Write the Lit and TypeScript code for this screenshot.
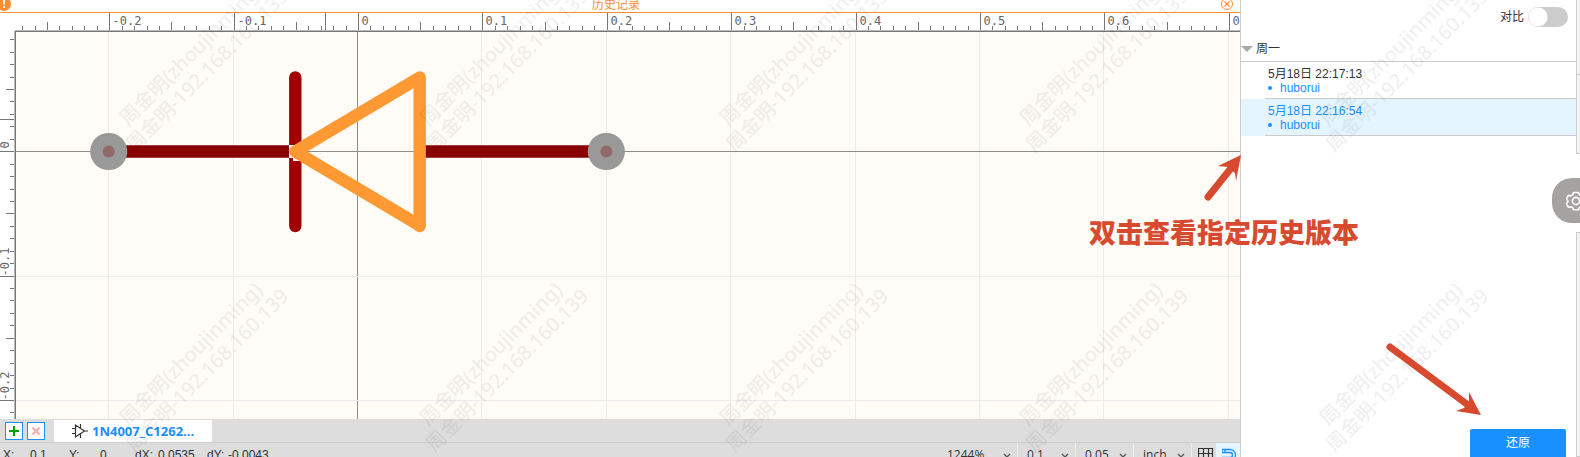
import { LitElement, html, svg, css } from "lit";
import { customElement, state } from "lit/decorators.js";

const STEP = 124.4;
const ORIGIN_X = 357.5;
const ORIGIN_Y = 138.7;
const RULER_TOP = 18;
const RULER_LEFT = 15;

const range = (from: number, to: number) =>
  Array.from({ length: Math.max(0, to - from + 1) }, (_, i) => from + i);

// Ruler units are tenths of an inch, one minor tick each hundredth.
const label = (tick: number) => (tick === 0 ? "0" : (tick / 100).toFixed(1));

@customElement("schematic-canvas")
export class SchematicCanvas extends LitElement {
  @state() private w = 1240;
  @state() private h = 406;
  private observer?: ResizeObserver;

  static styles = css`
    :host {
      display: block;
      overflow: hidden;
      background: #fffcf7;
    }
    .sheet {
      display: block;
      width: 100%;
      height: 100%;
    }
    .ruler {
      fill: #fff;
    }
    .grid {
      stroke: #ececec;
    }
    .axis {
      stroke: #8f8f8a;
    }
    .edge {
      stroke: #777;
    }
    .edge-soft {
      stroke: #bbb;
    }
    .tick {
      stroke: #777;
    }
    .num {
      font: 12px "DejaVu Sans Mono", monospace;
      fill: #666;
    }
  `;

  connectedCallback() {
    super.connectedCallback();
    this.observer = new ResizeObserver(() => {
      this.w = this.clientWidth;
      this.h = this.clientHeight;
    });
    this.observer.observe(this);
  }

  disconnectedCallback() {
    super.disconnectedCallback();
    this.observer?.disconnect();
  }

  render() {
    const { w, h } = this;
    const minor = STEP / 10;
    const x = (n: number) => Math.floor(ORIGIN_X + n * minor) + 0.5;
    const y = (n: number) => Math.floor(ORIGIN_Y + n * minor) + 0.5;
    const cols = range(Math.ceil((RULER_LEFT + 4 - ORIGIN_X) / minor), Math.floor((w - ORIGIN_X) / minor));
    const rows = range(Math.ceil((RULER_TOP + 6 - ORIGIN_Y) / minor), Math.floor((h - ORIGIN_Y) / minor));
    const size = (n: number, full: number, mid: number) =>
      n % 10 === 0 ? full : n % 5 === 0 ? mid : 5;
    const majorCols = cols.filter((n) => n % 10 === 0);
    const majorRows = rows.filter((n) => n % 10 === 0);

    return html`
      <svg class="sheet" role="img" aria-label="Schematic">
        ${majorCols.map((n) => svg`<line class=${n ? "grid" : "axis"} x1=${x(n)} x2=${x(n)} y1=${RULER_TOP} y2=${h} />`)}
        ${majorRows.map((n) => svg`<line class=${n ? "grid" : "axis"} y1=${y(n)} y2=${y(n)} x1=${RULER_LEFT} x2=${w} />`)}

        <g fill="none" stroke-width="12.4">
          <path d="M295.3 64.5V213" stroke="#a00000" stroke-linecap="round" />
          <path d="M289 132h7v13h-7zM293 144h8v4h-8z" fill="#fff" stroke="none" />
          <path d="M108.5 138.5H289M420 138.5H601" stroke="#880000" />
          <path d="M418 65.5L295.3 138.5L418 211.5" stroke="#ff9933" stroke-linejoin="round" />
          <path d="M419.7 64.5V213" stroke="#ff9933" stroke-linecap="round" />
        </g>
        ${[108.7, 606.3].map((cx) => svg`
          <circle cx=${cx} cy="138.5" r="18.6" fill="#999" />
          <circle cx=${cx} cy="138.5" r="6" fill="#936a6a" />`)}

        <rect class="ruler" x="0" y="0" width=${w} height=${RULER_TOP} />
        <rect class="ruler" x="0" y="0" width=${RULER_LEFT} height=${h} />
        ${cols.map((n) => svg`<line class="tick" x1=${x(n) + 1} x2=${x(n) + 1} y1=${RULER_TOP - size(n, 18, 9)} y2=${RULER_TOP} />`)}
        ${rows.map((n) => svg`<line class="tick" y1=${y(n)} y2=${y(n)} x1=${RULER_LEFT - size(n, 15, 9)} x2=${RULER_LEFT} />`)}
        <line class="tick" x1="325.5" x2="325.5" y1="0" y2=${RULER_TOP} />
        <line class="tick" x1="0" x2=${RULER_LEFT} y1="106.5" y2="106.5" />
        <line class="edge-soft" x1=${RULER_LEFT} x2=${w} y1="17.5" y2="17.5" />
        <line class="edge" x1=${RULER_LEFT} x2=${w} y1="18.5" y2="18.5" />
        <line class="edge-soft" x1="14.5" x2="14.5" y1=${RULER_TOP} y2=${h} />
        <line class="edge" x1="15.5" x2="15.5" y1=${RULER_TOP} y2=${h} />
        ${majorCols.map((n) => svg`<text class="num" x=${x(n) + 4} y="12">${label(n)}</text>`)}
        ${majorRows.map((n) => svg`<text class="num" transform="translate(9 ${y(n) - (n ? 0 : 3)}) rotate(-90)">${label(-n)}</text>`)}
      </svg>
    `;
  }
}

@customElement("app-root")
export class AppRoot extends LitElement {
  static styles = css`
    :host {
      display: flex;
      position: relative;
      height: 100vh;
      overflow: hidden;
      background: #fff;
      color: #333;
      font: 12px/14px "Liberation Sans", "Noto Sans CJK SC", sans-serif;
    }
    button,
    select {
      font: inherit;
      color: inherit;
      margin: 0;
      padding: 0;
      border: 0;
      background: none;
    }
    svg {
      display: block;
    }
    .work {
      flex: 1;
      min-width: 0;
      display: flex;
      flex-direction: column;
      border-right: 1px solid #ccc;
    }
    .banner {
      display: grid;
      grid-template-columns: 24px 1fr 32px;
      flex: none;
      height: 12px;
      border-bottom: 1px solid #ff8c2e;
      color: #ff8c2e;
      text-align: center;
      line-height: 11px;
    }
    .banner svg {
      overflow: visible;
    }
    .canvas {
      flex: 1;
      min-height: 0;
    }
    .tabs {
      display: flex;
      align-items: center;
      flex: none;
      height: 23px;
      gap: 4px;
      padding-left: 5px;
      background: #ddd;
      border-bottom: 1px solid #ccc;
    }
    .tool {
      display: grid;
      place-items: center;
      box-sizing: border-box;
      width: 18px;
      height: 18px;
      background: #fff;
      border: 1px solid #1890ff;
    }
    .tab {
      display: flex;
      align-items: center;
      align-self: end;
      gap: 4px;
      height: 22px;
      width: 158px;
      margin-left: 5px;
      padding-left: 18px;
      background: #fff;
      color: #1890ff;
      font: bold 13px/22px "Open Sans", sans-serif;
    }
    .status {
      display: flex;
      flex: none;
      height: 14px;
      overflow: hidden;
      background: #ddd;
    }
    .coords {
      flex: 1;
      display: grid;
      grid-template-columns: 27px 39px 31px 35px 23px 49px 21px 50px;
      margin: 0;
      padding: 5px 0 0 3px;
      white-space: nowrap;
    }
    .coords dt,
    .coords dd {
      margin: 0;
    }
    .pick {
      display: grid;
      grid-template-columns: 1fr 8px;
      align-items: start;
      box-sizing: border-box;
      width: 58px;
      padding: 3px 6px 0 9px;
      border-right: 1px solid #eee;
      font: 12px/18px "Open Sans", sans-serif;
    }
    .pick select {
      appearance: none;
      height: 18px;
    }
    .pick svg {
      margin-top: 4px;
    }
    .zoom {
      width: 80px;
    }
    .square {
      box-sizing: border-box;
      width: 24px;
      padding: 5px 0 0 6px;
      overflow: hidden;
    }
    .square svg {
      height: 16px;
    }
    .on {
      background: #e4f5ff;
    }
    .panel {
      flex: none;
      width: 335px;
      display: flex;
      flex-direction: column;
    }
    .compare {
      display: flex;
      justify-content: flex-end;
      align-items: center;
      gap: 4px;
      height: 20px;
      padding: 7px 8px 9px;
      line-height: 20px;
    }
    .switch {
      appearance: none;
      width: 40px;
      height: 20px;
      margin: 0;
      border-radius: 10px;
      background: radial-gradient(circle at 10px 10px, #fff 9px, transparent 10px) #ccc;
    }
    .switch:checked {
      background: radial-gradient(circle at 30px 10px, #fff 9px, transparent 10px) #1890ff;
    }
    .day {
      display: flex;
      align-items: center;
      gap: 3px;
      width: 100%;
      height: 26px;
      border-bottom: 1px solid #ccc;
    }
    .log {
      flex: 1;
      list-style: none;
      margin: 0;
      padding: 0;
    }
    .entry {
      padding-left: 24px;
    }
    .entry.picked {
      background: #e4f5ff;
    }
    .version {
      width: 100%;
      height: 37px;
      padding: 2px 3px 0;
      border-bottom: 1px solid #ccc;
      text-align: left;
    }
    .picked .when {
      color: #1890ff;
    }
    .when,
    .who {
      display: block;
      white-space: nowrap;
    }
    .who {
      color: #1890ff;
    }
    .who::before {
      content: "";
      display: inline-block;
      width: 4px;
      height: 4px;
      margin-right: 8px;
      border-radius: 2px;
      background: #1890ff;
      vertical-align: 2px;
    }
    .restore {
      align-self: flex-end;
      width: 96px;
      height: 28px;
      margin-right: 10px;
      border-radius: 2px 2px 0 0;
      background: #1890ff;
      color: #fff;
    }
    .rail {
      flex: none;
      width: 4px;
      display: grid;
      grid-template-rows: 75px 79px 78px 1fr;
    }
    .cell {
      border-left: 1px solid #ccc;
      border-bottom: 1px solid #ccc;
      background: #f4f4f4;
      box-sizing: border-box;
    }
    .cell.last {
      grid-row: 4;
      border-top: 1px solid #ccc;
    }
    .gear {
      position: absolute;
      right: 0;
      top: 178px;
      width: 28px;
      height: 45px;
      padding-left: 14px;
      overflow: hidden;
      border-radius: 20px 0 0 20px;
      background: #a6a2a2;
    }
    .marks,
    .notes {
      position: absolute;
      pointer-events: none;
      top: 0;
    }
    .marks {
      left: 0;
      width: 100%;
      height: 100%;
    }
    .marks text {
      font: 500 20px "Noto Sans", "Noto Sans CJK SC", sans-serif;
      text-anchor: middle;
      fill: #000;
      fill-opacity: 0.06;
    }
    .notes {
      right: 0;
      width: 500px;
    }
    .tip {
      position: absolute;
      right: 221px;
      top: 213px;
      color: #d84a2f;
      white-space: nowrap;
      font: 900 27px/38px "Noto Sans CJK SC", sans-serif;
      pointer-events: none;
    }
  `;

  private pick(name: string, value: string, extra = "") {
    return html`<label class="pick ${extra}">
      <select aria-label=${name}><option>${value}</option></select>
      <svg width="8" height="12" fill="none" stroke="#555" stroke-width="1.3"><path d="M1 4l3 3 3-3" /></svg>
    </label>`;
  }

  private entry(time: string, user: string, picked = false) {
    return html`<li class="entry ${picked ? "picked" : ""}">
      <button class="version"><span class="when">${time}</span><span class="who">${user}</span></button>
    </li>`;
  }

  render() {
    return html`
      <main class="work">
        <header class="banner">
          <svg width="24" height="12"><circle cx="4" cy="4" r="7" fill="#ff8c2e" /><path d="M4 0v4.5M4 6v2" stroke="#fff" stroke-width="2" /></svg>
          <span>历史记录</span>
          <svg width="24" height="12" fill="none" stroke="#ff8c2e"><circle cx="19" cy="4" r="5.5" /><path d="M16.5 1.5l5 5m0-5l-5 5" stroke-width="1.2" /></svg>
        </header>
        <schematic-canvas class="canvas"></schematic-canvas>
        <nav class="tabs">
          <button class="tool" aria-label="Add"><svg width="12" height="12"><path d="M6 1v10M1 6h10" stroke="#00a000" stroke-width="2" /></svg></button>
          <button class="tool" aria-label="Close"><svg width="12" height="12"><path d="M2.500 2.500l7 7m0-7l-7 7" stroke="#ffaaaa" stroke-width="2.2" /></svg></button>
          <button class="tab">
            <svg width="16" height="16" fill="none" stroke="#333" stroke-width="1.2"><path d="M3.500 2v12L12.500 8zM0 5.500h3.500M0 10.500h3.500M12 8h4M8.500 1v4.500M8.500 10.500v4.500" /></svg>
            <span>1N4007_C1262...</span>
          </button>
        </nav>
        <footer class="status">
          <dl class="coords">
            <dt>X:</dt><dd>0.1</dd><dt>Y:</dt><dd>0</dd><dt>dX:</dt><dd>0.0535</dd><dt>dY:</dt><dd>-0.0043</dd>
          </dl>
          ${this.pick("Zoom", "1244%", "zoom")} ${this.pick("Grid", "0.1")} ${this.pick("Snap", "0.05")}
          ${this.pick("Unit", "inch")}
          <button class="square" aria-label="Grid"><svg width="16" height="16" fill="none" stroke="#333"><path d="M.5.5h14v14H.5zM5.500.5v14M10.500.5v14M.5 5.500h14M.5 10.500h14" stroke-width="1.2" /></svg></button>
          <button class="square on" aria-label="Snap"><svg width="16" height="16" fill="none" stroke="#1890ff" stroke-width="1.3"><path d="M0 1.500h8a5.500 5.500 0 0 1 0 11H0v-3h8a2.500 2.500 0 0 0 0-5H0zM3 1.500v3" /></svg></button>
        </footer>
      </main>

      <aside class="panel">
        <label class="compare">对比<input class="switch" type="checkbox" role="switch" /></label>
        <button class="day"><svg width="12" height="8"><path d="M0 1h12L6 7z" fill="#aaa" /></svg>周一</button>
        <ul class="log">
          ${this.entry("5月18日 22:17:13", "huborui")} ${this.entry("5月18日 22:16:54", "huborui", true)}
        </ul>
        <button class="restore">还原</button>
      </aside>
      <div class="rail"><div class="cell"></div><div class="cell"></div><div class="cell last"></div></div>
      <button class="gear" aria-label="Settings">
        <svg width="20" height="20" viewBox="-10 -10 20 20" fill="none" stroke="#fff" stroke-width="1.6" stroke-linejoin="round">
          <path d="M-2.500-8.500h5l.8 2.300 2 1.100 2.400-.5 2 3.600-1.500 1.500v1.500l1.500 1.600-2 3.500-2.400-.4-2 1.100-.8 2h-5l-.8-2-2-1.100-2.400.4-2-3.500 1.500-1.600v-1.500l-1.500-1.500 2-3.600 2.400.5 2-1.100z" />
          <circle r="3.6" />
        </svg>
      </button>

      <svg class="marks" aria-hidden="true">
        <pattern id="stamp" y="-50" width="300" height="300" patternUnits="userSpaceOnUse">
          <g transform="translate(198 111) rotate(-45)">
            <text y="-3">周金明(zhoujinming)</text>
            <text y="20">周金明-192.168.160.139</text>
          </g>
        </pattern>
        <rect width="100%" height="100%" fill="url(#stamp)" />
      </svg>
      <svg class="notes" height="430" viewBox="1080 0 500 430" fill="#d84a2f" stroke="#d84a2f">
        <path d="M1208 197L1232 167" stroke-width="7" stroke-linecap="round" />
        <path d="M1241 155l-23 11 10 1 7 6 1 8z" stroke="none" />
        <path d="M1390 347L1468 405" stroke-width="7" stroke-linecap="round" />
        <path d="M1481 415l-12-23v9l-5 7-8 3z" stroke="none" />
      </svg>
      <div class="tip">双击查看指定历史版本</div>
    `;
  }
}
